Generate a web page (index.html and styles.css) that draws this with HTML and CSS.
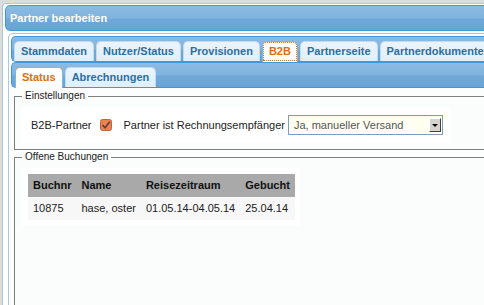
FILE: index.html
```html
<!DOCTYPE html>
<html lang="de">
<head>
  <meta charset="UTF-8">
  <title>Partner bearbeiten</title>
  <link rel="stylesheet" href="styles.css">
</head>
<body>

<div class="dialog">
  <div class="titlebar">Partner bearbeiten</div>
  <div class="dialog-content">
    <div class="tabs">
      <ul class="tab-nav">
        <li class="tab">Stammdaten</li>
        <li class="tab">Nutzer/Status</li>
        <li class="tab">Provisionen</li>
        <li class="tab active focus">B2B</li>
        <li class="tab">Partnerseite</li>
        <li class="tab">Partnerdokumente</li>
      </ul>
      <div class="tab-panel">
        <ul class="tab-nav sub">
          <li class="tab active">Status</li>
          <li class="tab">Abrechnungen</li>
        </ul>
        <div class="sub-panel">
          <fieldset class="group">
            <legend>Einstellungen</legend>
            <div class="settings-row">
              <span>B2B-Partner</span>
              <svg class="checkbox" width="12" height="12" viewBox="0 0 12 12">
                <rect x="0.5" y="0.5" width="11" height="11" rx="2" fill="#ee8150" stroke="#c4623a"/>
                <path d="M2.5 6 L5 8.8 L9.8 2.8" fill="none" stroke="#5b4038" stroke-width="1.6"/>
              </svg>
              <span>Partner ist Rechnungsempfänger</span>
              <div class="select">
                <span>Ja, manueller Versand</span>
                <span class="select-btn"><span class="arrow"></span></span>
              </div>
            </div>
          </fieldset>
          <fieldset class="group open">
            <legend>Offene Buchungen</legend>
            <div class="table-wrap">
              <table class="bookings">
                <tr><th>Buchnr</th><th>Name</th><th>Reisezeitraum</th><th>Gebucht</th></tr>
                <tr><td>10875</td><td>hase, oster</td><td>01.05.14-04.05.14</td><td>25.04.14</td></tr>
              </table>
            </div>
          </fieldset>
        </div>
      </div>
    </div>
  </div>
</div>

</body>
</html>
```

FILE: styles.css
```css
body {
  margin: 0;
  padding-top: 3px;
  background: #dcdcdc;
  font-family: "Liberation Sans", Arial, sans-serif;
  font-size: 11px;
  color: #222;
  overflow: hidden;
}
.dialog {
  margin-left: 2px;
  width: 620px;
  height: 340px;
  padding: 1px 2px 0;
  background: #fff;
  border: 1px solid #a6c9e2;
  border-right: none;
  border-radius: 4px 0 0 0;
}
.titlebar {
  height: 24px;
  padding-left: 4px;
  display: flex;
  align-items: center;
  border: 1px solid #4297d7;
  border-radius: 5px;
  background: linear-gradient(#8cbbe3, #80b3de 48%, #70a9d9 55%, #68a4d5);
  color: #fff;
  font-weight: bold;
}
.dialog-content {
  padding: 2px 0 0 3px;
}
.tabs {
  padding: 2px 0 0 2px;
  border: 1px solid #a6c9e2;
  border-right: none;
  border-radius: 5px 0 0 0;
  background: #fff;
}
.tab-nav {
  display: flex;
  margin: 0;
  padding: 4px 2px 0 2px;
  list-style: none;
  border: 1px solid #4297d7;
  border-right: none;
  border-radius: 5px 0 0 5px;
  background: linear-gradient(#8cbbe3, #80b3de 48%, #70a9d9 55%, #68a4d5);
}
.tab-nav.sub {
  padding-left: 3px;
}
.tab {
  margin-right: 2px;
  padding: 3px 6px;
  line-height: 13px;
  white-space: nowrap;
  border: 1px solid #c5dbec;
  border-bottom: none;
  border-radius: 5px 5px 0 0;
  background: linear-gradient(#eaf4fd, #dfeffc);
  color: #2e6e9e;
  font-weight: bold;
}
.tab.active {
  margin-bottom: -1px;
  padding-bottom: 4px;
  border-color: #79b7e7;
  background: #fff;
  color: #e17009;
}
.tab.focus {
  outline: 1px dotted #e17009;
  outline-offset: -2px;
}
.sub-panel {
  padding: 2px 3px 0;
  background: #fcfdfd;
}
.group {
  margin: 0 0 1px;
  padding: 5px 7px 6px;
  min-width: 0;
  border: 1px solid #808080;
  background: #fbfcfc;
}
.group.open {
  height: 160px;
}
.group legend {
  padding: 0 3px;
  font-size: 10px;
  line-height: 12px;
  color: #222;
}
.settings-row {
  box-sizing: border-box;
  width: 428px;
  height: 36px;
  padding-left: 9px;
  display: flex;
  align-items: center;
  background: #fff;
}
.checkbox {
  margin: 0 12px 0 8px;
}
.select {
  box-sizing: border-box;
  width: 155px;
  height: 20px;
  margin-left: 3px;
  padding: 0 1px 0 5px;
  display: flex;
  align-items: center;
  justify-content: space-between;
  border: 1px solid #7f9db9;
  background: #fffff2;
  color: #555;
}
.select-btn {
  box-sizing: border-box;
  width: 12px;
  height: 14px;
  display: flex;
  align-items: center;
  justify-content: center;
  background: #d6d3ce;
  border: 1px solid;
  border-color: #fff #404040 #404040 #fff;
}
.arrow {
  width: 0;
  height: 0;
  border-left: 3px solid transparent;
  border-right: 3px solid transparent;
  border-top: 3px solid #000;
}
.table-wrap {
  display: inline-block;
  padding: 6px 5px 6px 6px;
  background: #fff;
}
.bookings {
  border-collapse: collapse;
}
.bookings th,
.bookings td {
  padding: 5px;
  line-height: 13px;
  text-align: left;
  white-space: nowrap;
}
.bookings th {
  background: #a9a9a9;
  color: #111;
}
.bookings td {
  background: #f7f7f7;
  color: #222;
}
```
